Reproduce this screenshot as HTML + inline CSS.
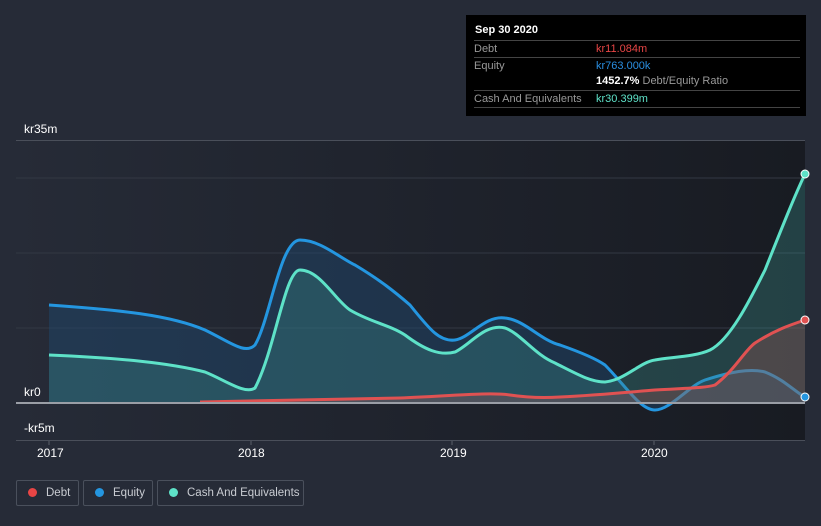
<!DOCTYPE html><html><head><style>
body{margin:0;width:821px;height:526px;background:#262b37;font-family:"Liberation Sans",sans-serif;overflow:hidden;position:relative}
.t{position:absolute;color:#fff;font-size:12px}
.tip{position:absolute;left:466px;top:15px;width:340px;height:101px;background:#000;font-size:11px}
.row{position:absolute;left:8px;width:326px;border-top:1px solid #444;height:16px;line-height:17px}
.lg{position:absolute;top:480px;height:26px;border:1px solid #4a505c;border-radius:2px;color:#c9ccd2;font-size:11.5px;line-height:25px;box-sizing:border-box;white-space:nowrap}
.dot{display:inline-block;width:9px;height:9px;border-radius:50%;margin:0 9px 0 11px;vertical-align:-1px}
</style></head><body>
<svg width="821" height="526" style="position:absolute;left:0;top:0">
<defs><linearGradient id="bg" x1="0" x2="1"><stop offset="0" stop-color="#262b37"/><stop offset="1" stop-color="#181b22"/></linearGradient></defs>
<rect x="16" y="140" width="789" height="300" fill="url(#bg)"/>
<line x1="16" y1="140.5" x2="805" y2="140.5" stroke="#4a4f5a"/>
<g stroke="#333843"><line x1="16" y1="178" x2="805" y2="178"/><line x1="16" y1="253" x2="805" y2="253"/><line x1="16" y1="328" x2="805" y2="328"/></g>
<line x1="16" y1="440.5" x2="805" y2="440.5" stroke="#4a4f5a"/>
<path d="M49,305 C120,310 170,315 205,330 C230,342 245,355 255,345 C270,320 280,240 300,240 C320,240 340,258 355,265 C380,280 395,292 410,305 C430,330 440,342 455,340 C470,338 485,315 505,318 C525,320 540,340 560,345 C580,352 595,358 605,365 C625,385 640,410 655,410 C670,410 690,385 705,380 C730,372 750,368 765,372 C785,380 795,392 805,397 L805,403 L49,403Z" fill="#1f4a70" fill-opacity=".45"/>
<path d="M49,305 C120,310 170,315 205,330 C230,342 245,355 255,345 C270,320 280,240 300,240 C320,240 340,258 355,265 C380,280 395,292 410,305 C430,330 440,342 455,340 C470,338 485,315 505,318 C525,320 540,340 560,345 C580,352 595,358 605,365 C625,385 640,410 655,410 C670,410 690,385 705,380 C730,372 750,368 765,372 C785,380 795,392 805,397" fill="none" stroke="#2496e0" stroke-width="3"/>
<path d="M49,355 C120,358 170,363 205,372 C225,380 245,395 255,388 C275,350 285,270 300,270 C320,270 335,300 350,310 C370,322 390,325 405,335 C425,350 440,356 455,352 C470,345 485,323 505,328 C520,333 535,355 555,363 C575,373 590,382 605,382 C625,380 640,362 655,360 C670,357 695,357 710,350 C730,340 750,300 765,270 C785,220 795,195 805,174 L805,403 L49,403Z" fill="#3a8a88" fill-opacity=".35"/>
<path d="M49,355 C120,358 170,363 205,372 C225,380 245,395 255,388 C275,350 285,270 300,270 C320,270 335,300 350,310 C370,322 390,325 405,335 C425,350 440,356 455,352 C470,345 485,323 505,328 C520,333 535,355 555,363 C575,373 590,382 605,382 C625,380 640,362 655,360 C670,357 695,357 710,350 C730,340 750,300 765,270 C785,220 795,195 805,174" fill="none" stroke="#5ee2c8" stroke-width="3"/>
<path d="M200,402 L400,398 C450,396 490,392 510,395 C530,398 545,398 560,397 C600,395 630,392 655,390 C690,388 705,388 715,385 C735,370 745,350 755,343 C775,330 790,325 805,320 L805,403 L200,403Z" fill="#a85656" fill-opacity=".3"/>
<path d="M200,402 L400,398 C450,396 490,392 510,395 C530,398 545,398 560,397 C600,395 630,392 655,390 C690,388 705,388 715,385 C735,370 745,350 755,343 C775,330 790,325 805,320" fill="none" stroke="#e05252" stroke-width="3"/>
<line x1="16" y1="403" x2="805" y2="403" stroke="#9a9ea6" stroke-width="2"/>
<circle cx="805" cy="174" r="4" fill="#5ee2c8" stroke="#fff"/><circle cx="805" cy="320" r="4" fill="#e05252" stroke="#fff"/><circle cx="805" cy="397" r="4" fill="#2496e0" stroke="#fff"/>
<g stroke="#5a5f6a"><line x1="49" y1="441" x2="49" y2="445"/><line x1="251" y1="441" x2="251" y2="445"/><line x1="452" y1="441" x2="452" y2="445"/><line x1="654" y1="441" x2="654" y2="445"/></g>
</svg>
<div class="t" style="left:24px;top:122px">kr35m</div>
<div class="t" style="left:24px;top:385px">kr0</div>
<div class="t" style="left:24px;top:421px">-kr5m</div>
<div class="t" style="left:37px;top:446px">2017</div>
<div class="t" style="left:238px;top:446px">2018</div>
<div class="t" style="left:440px;top:446px">2019</div>
<div class="t" style="left:641px;top:446px">2020</div>
<div class="tip">
<div style="position:absolute;left:9px;top:9px;color:#fff;font-weight:bold">Sep 30 2020</div>
<div class="row" style="top:25px"><span style="color:#999">Debt</span><span style="position:absolute;left:122px;color:#e84545">kr11.084m</span></div>
<div class="row" style="top:42px"><span style="color:#999">Equity</span><span style="position:absolute;left:122px;color:#2a8ee0">kr763.000k</span></div>
<div style="position:absolute;left:130px;top:60px;color:#fff"><b>1452.7%</b> <span style="color:#999">Debt/Equity Ratio</span></div>
<div class="row" style="top:75px;border-bottom:1px solid #444"><span style="color:#999">Cash And Equivalents</span><span style="position:absolute;left:122px;color:#5ee2c8">kr30.399m</span></div>
</div>
<div class="lg" style="left:16px;width:63px"><span class="dot" style="background:#e84545"></span>Debt</div>
<div class="lg" style="left:83px;width:70px"><span class="dot" style="background:#2496e0"></span>Equity</div>
<div class="lg" style="left:157px;width:147px"><span class="dot" style="background:#5ee2c8"></span>Cash And Equivalents</div>
</body></html>
